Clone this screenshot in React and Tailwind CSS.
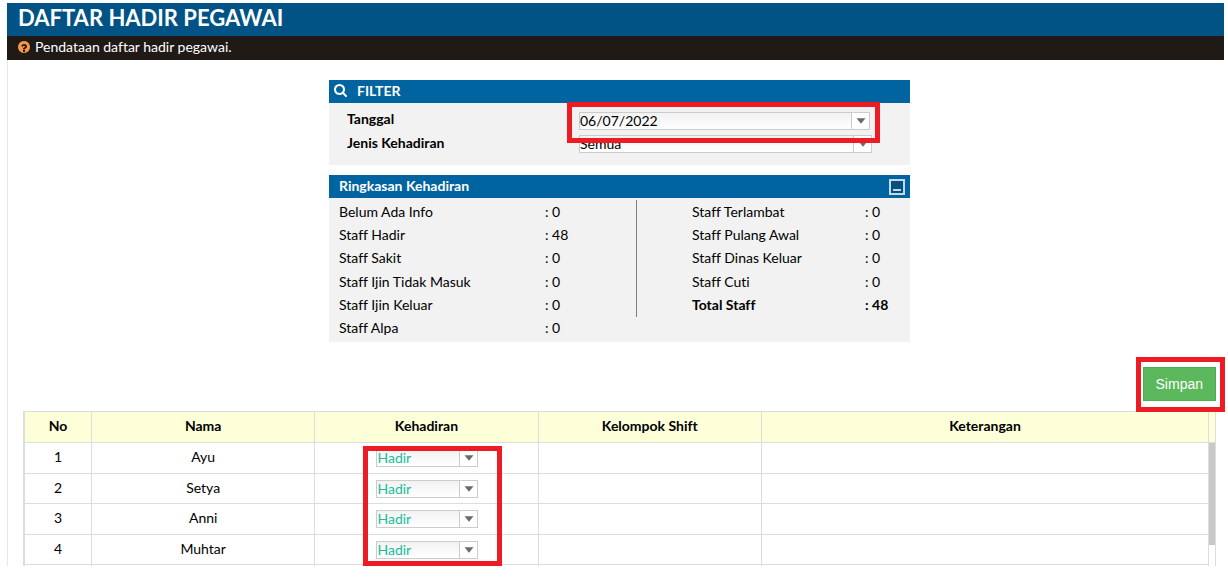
const leftSummary = [
  ["Belum Ada Info", 0],
  ["Staff Hadir", 48],
  ["Staff Sakit", 0],
  ["Staff Ijin Tidak Masuk", 0],
  ["Staff Ijin Keluar", 0],
  ["Staff Alpa", 0],
];

const rightSummary = [
  ["Staff Terlambat", 0],
  ["Staff Pulang Awal", 0],
  ["Staff Dinas Keluar", 0],
  ["Staff Cuti", 0],
  ["Total Staff", 48],
];

const employees = ["Ayu", "Setya", "Anni", "Muhtar"];

const frame =
  "border border-[#cccccc] bg-linear-to-b from-[#f2f2f2] to-white";

function SearchIcon() {
  return (
    <svg viewBox="0 0 1664 1664" className="size-[13px]" fill="currentColor" aria-hidden="true">
      <path d="M1152 704q0-185-131.5-316.5T704 256 387.5 387.5 256 704t131.5 316.5T704 1152t316.5-131.5T1152 704zm512 832q0 52-38 90t-90 38q-54 0-90-38l-343-342q-179 124-399 124-143 0-273.5-55.5t-225-150-150-225T0 704t55.5-273.5 150-225 225-150T704 0t273.5 55.5 225 150 150 225T1408 704q0 220-124 399l343 343q37 37 37 90z" />
    </svg>
  );
}

function HelpIcon() {
  return (
    <svg viewBox="0 0 1536 1536" className="size-3 text-[#f79646]" fill="currentColor" aria-hidden="true">
      <path d="M896 1376v-192q0-14-9-23t-23-9H672q-14 0-23 9t-9 23v192q0 14 9 23t23 9h192q14 0 23-9t9-23zm256-672q0-88-55.5-163T958 425t-170-41q-243 0-371 213-15 24 8 42l132 100q7 6 19 6 16 0 25-12 53-68 86-92 34-24 86-24 48 0 85.5 26t37.5 59q0 38-20 61t-68 45q-63 28-115.5 86.5T640 1020v36q0 14 9 23t23 9h192q14 0 23-9t9-23q0-19 21.500-49.500T972 957q32-18 49-28.500t46-35 44.500-48 28-60.500 12.500-81zm384 64q0 209-103 385.500T1153.500 1433 768 1536t-385.500-103T103 1153.500 0 768t103-385.500T382.500 103 768 0t385.500 103T1433 382.500 1536 768z" />
    </svg>
  );
}

function Arrow() {
  return (
    <svg viewBox="0 0 10 6" className="h-[6px] w-[10px]" aria-hidden="true">
      <path d="M0.5 0.3h9L5 5.8z" fill="#6b6b6b" />
    </svg>
  );
}

function Dropdown({ id, label, options, textColor }) {
  return (
    <div className={`grid h-[18px] w-full ${frame}`}>
      <select
        id={id}
        aria-label={label}
        className={`col-start-1 row-start-1 w-full appearance-none pr-5 text-left leading-4 outline-none ${textColor}`}
      >
        {options.map((option) => (
          <option key={option}>{option}</option>
        ))}
      </select>
      <span className="pointer-events-none col-start-1 row-start-1 flex w-[18px] items-center justify-center justify-self-end border-l border-[#cccccc] bg-white">
        <Arrow />
      </span>
    </div>
  );
}

function Highlight({ className }) {
  return (
    <div
      className={`pointer-events-none absolute z-10 border-[5px] border-[#ed1c24] ${className}`}
    />
  );
}

function Filter() {
  return (
    <section className="bg-[#f2f2f2]">
      <h2 className="flex h-[23px] items-center gap-[10px] bg-[#0064a0] pb-[2px] pl-[5px] font-bold text-white">
        <SearchIcon />
        FILTER
      </h2>
      <div className="pt-1 pr-[38px] pb-[10px] pl-[18px]">
        <div className="flex h-6 items-center">
          <label htmlFor="tanggal" className="w-[232px] shrink-0 font-bold">
            Tanggal
          </label>
          <div className="relative mt-1 mr-[2px] flex-1">
            <div className={`flex h-[18px] ${frame}`}>
              <input
                id="tanggal"
                type="text"
                defaultValue="06/07/2022"
                className="min-w-0 flex-1 leading-4 outline-none"
              />
              <button
                type="button"
                aria-label="Pilih tanggal"
                className="flex w-[18px] items-center justify-center border-l border-[#cccccc] bg-white"
              >
                <Arrow />
              </button>
            </div>
            <Highlight className="-top-[10px] -right-[10px] -bottom-[13px] -left-3" />
          </div>
        </div>
        <div className="flex h-6 items-center">
          <label htmlFor="jenis" className="w-[232px] shrink-0 font-bold">
            Jenis Kehadiran
          </label>
          <div className="flex-1 pt-px">
            <Dropdown id="jenis" options={["Semua", "Hadir", "Sakit"]} textColor="text-black" />
          </div>
        </div>
      </div>
    </section>
  );
}

function Summary() {
  return (
    <section className="mt-[10px] bg-[#f2f2f2]">
      <div className="flex h-[23px] items-center justify-between bg-[#0064a0] pr-[5px] pl-[10px] text-white">
        <h2 className="pb-[2px] font-bold">Ringkasan Kehadiran</h2>
        <button
          type="button"
          aria-label="Tutup ringkasan"
          className="flex size-4 items-end justify-center border-2 border-[#c3dbe9] bg-[#075080] pb-[2px]"
        >
          <span className="h-[2px] w-2 bg-[#c3dbe9]" />
        </button>
      </div>
      <div className="grid grid-cols-[307fr_274fr] items-start py-[2px]">
        <dl className="grid h-[140px] grid-rows-6 pl-[10px]">
          {leftSummary.map(([name, value]) => (
            <div key={name} className="grid grid-cols-[206px_1fr] items-center">
              <dt>{name}</dt>
              <dd>: {value}</dd>
            </div>
          ))}
        </dl>
        <dl className="grid h-[117px] grid-rows-5 border-l border-[#808080] pl-[55px]">
          {rightSummary.map(([name, value]) => (
            <div key={name} className="grid grid-cols-[173px_1fr] items-center last:font-bold">
              <dt>{name}</dt>
              <dd>: {value}</dd>
            </div>
          ))}
        </dl>
      </div>
    </section>
  );
}

function AttendanceTable() {
  const cell = "border border-[#dddddd] p-0";
  const textCell = "border border-[#dddddd] p-0 pb-[2px]";
  return (
    <div className="border-l border-[#dddddd]">
      <table className="w-full table-fixed border-collapse text-center">
        <colgroup>
          <col className="w-[67px]" />
          <col className="w-[18.75%]" />
          <col className="w-[18.75%]" />
          <col className="w-[18.75%]" />
          <col />
          <col className="w-[7px]" />
        </colgroup>
        <thead className="bg-[#fdffd9]">
          <tr className="h-[31px]">
            <th className={textCell}>No</th>
            <th className={textCell}>Nama</th>
            <th className={textCell}>Kehadiran</th>
            <th className={textCell}>Kelompok Shift</th>
            <th className={textCell}>Keterangan</th>
            <td className={cell} />
          </tr>
        </thead>
        <tbody>
          {employees.map((name, index) => (
            <tr key={name} className="odd:h-[31px] even:h-[30px]">
              <td className={textCell}>{index + 1}</td>
              <td className={textCell}>{name}</td>
              <td className="border border-[#dddddd] p-0 pl-[2px]">
                <div className="relative mx-auto w-[102px]">
                  <Dropdown
                    label={`Kehadiran ${name}`}
                    options={["Hadir", "Sakit", "Cuti"]}
                    textColor="text-[#1abc9c]"
                  />
                  {index === 0 && (
                    <Highlight className="-top-[3px] -left-[13px] h-[120px] w-[139px]" />
                  )}
                </div>
              </td>
              <td className={cell} />
              <td className={cell} />
              {index === 0 && (
                <td rowSpan={5} className="border-x border-[#dddddd] p-0 align-top">
                  <div className="h-[102px] bg-[#c9c9c9]" />
                </td>
              )}
            </tr>
          ))}
          <tr className="h-px">
            <td className="border-x border-[#dddddd] p-0" />
            <td className="border-x border-[#dddddd] p-0" />
            <td className="border-x border-[#dddddd] p-0" />
            <td className="border-x border-[#dddddd] p-0" />
            <td className="border-x border-[#dddddd] p-0" />
          </tr>
        </tbody>
      </table>
    </div>
  );
}

export default function App() {
  return (
    <div className="bg-white pt-[3px] pr-1 pb-[14px] pl-[7px] font-['Lato',sans-serif] text-[14px] leading-5 text-black [font-variant-ligatures:none]">
      <header>
        <h1 className="flex h-[33px] items-center bg-[#005384] pb-[3px] pl-[11px] text-[22px] font-bold text-white">
          DAFTAR HADIR PEGAWAI
        </h1>
        <p className="flex h-6 items-center gap-[5px] bg-[#201a17] pb-[2px] pl-[11px] text-white">
          <HelpIcon />
          Pendataan daftar hadir pegawai.
        </p>
      </header>
      <main className="border-l border-[#e7e7e7] pt-5 pr-2 pl-[15px]">
        <div className="mx-auto w-full max-w-[581px]">
          <Filter />
          <Summary />
        </div>
        <div className="mt-[25px] mb-[10px] flex justify-end">
          <div className="relative">
            <button
              type="button"
              className="h-[34px] border border-[#4cae4c] bg-[#5cb85c] px-3 font-['Liberation_Sans',sans-serif] text-[14px] text-white"
            >
              Simpan
            </button>
            <Highlight className="-top-[10px] -right-[9px] -bottom-[11px] -left-[7px]" />
          </div>
        </div>
        <AttendanceTable />
      </main>
    </div>
  );
}
